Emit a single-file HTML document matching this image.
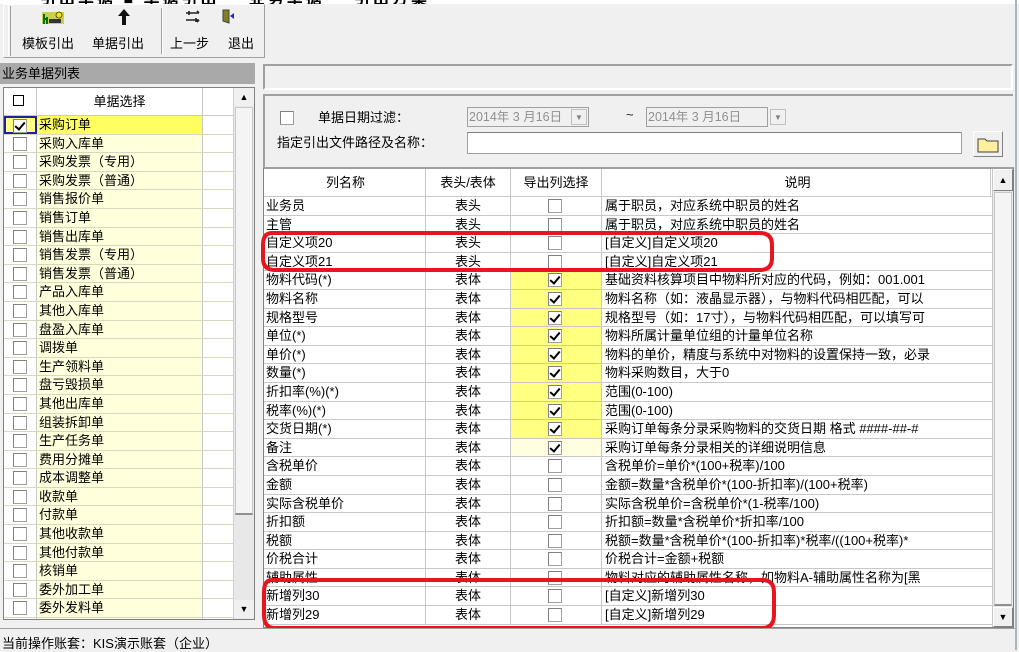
<!DOCTYPE html>
<html><head><meta charset="utf-8"><style>
*{box-sizing:border-box;margin:0;padding:0}
body{width:1019px;height:650px;overflow:hidden;background:#f0f0f0;font-family:"Liberation Sans","Noto Sans CJK SC","WenQuanYi Zen Hei",sans-serif;font-size:13px;color:#000;position:relative}
.abs{position:absolute}
.tb{font-size:13px;text-align:center}
.row{display:flex;height:18.6px;line-height:18px;border-bottom:1px solid #c8c8c8;background:#fff}
.row>div{border-right:1px solid #c8c8c8;overflow:hidden;white-space:nowrap;position:relative}
.c1{width:162px;padding-left:2px}.c2{width:85px;text-align:center}.c3{width:91px}.c4{width:389px;padding-left:3px;border-right:none!important}
.cb{position:absolute;left:37px;top:2px;width:14px;height:14px;border:1px solid #a0a0a0;border-top-color:#808080;border-left-color:#808080;background:#fff}
.ck::after{content:"";position:absolute;left:3px;top:0px;width:4px;height:8px;border:solid #000;border-width:0 2px 2px 0;transform:rotate(40deg)}
.y{background:#ffff80}.ly{background:#ffffe0}
.lrow{display:flex;height:18.6px;line-height:18px;border-bottom:1px solid #d8d8c0}
.lrow .a{width:33px;border-right:1px solid #c8c8c8;background:#fff;position:relative}
.lrow .b{width:166px;background:#ffffdc;padding-left:2px;border-right:1px solid #c8c8c8}
.lrow .cb{left:9px}
</style></head><body>
<div class="abs" style="left:0;top:0;width:1019px;height:4px;background:#fff;overflow:hidden"><div style="position:absolute;left:40px;top:-15px;font-size:16px;font-weight:bold;letter-spacing:3px;white-space:nowrap">引出单据 ■ 单据引出 ─ 业务单据 ─ 引出方案</div></div>
<div class="abs" style="left:1015px;top:0;width:2px;height:650px;background:#a8b4c4"></div>
<div class="abs" style="left:3px;top:4px;width:262px;height:54px;border:1px solid #fff;border-right-color:#a0a0a0;border-bottom-color:#a0a0a0"></div>
<div class="abs" style="left:8px;top:6px;width:3px;height:50px;border-left:1px solid #fff;border-right:1px solid #a0a0a0"></div>
<div class="abs" style="left:161px;top:8px;width:2px;height:46px;border-left:1px solid #a0a0a0;border-right:1px solid #fff"></div>
<svg class="abs" style="left:40px;top:10px" width="26" height="16"><rect x="2" y="2" width="22" height="12" fill="#c8d050"/><circle cx="19" cy="5" r="3" fill="#ffe000" stroke="#333" stroke-width=".8"/><path d="M4 14V4M7 14V7M4 9h3" stroke="#007000" stroke-width="2"/><rect x="9" y="9" width="12" height="4" fill="#333"/></svg>
<svg class="abs" style="left:116px;top:8px" width="16" height="18"><path d="M8 1L2 8h4v9h4V8h4z" fill="#111"/></svg>
<svg class="abs" style="left:185px;top:10px" width="16" height="14"><path d="M1 3h13M1 10h13M4 1v4M11 8v4M14 3l-2-2M14 10l-2 2" stroke="#222" stroke-width="1.6" fill="none"/></svg>
<svg class="abs" style="left:221px;top:8px" width="16" height="16"><path d="M2 2h6v13l-6-2z" fill="#808020" stroke="#444"/><path d="M9 8l4-3v6z" fill="#1030d0"/></svg>
<div class="abs tb" style="left:22px;top:33px">模板引出</div>
<div class="abs tb" style="left:92px;top:33px">单据引出</div>
<div class="abs tb" style="left:170px;top:33px">上一步</div>
<div class="abs tb" style="left:228px;top:33px">退出</div>
<div class="abs" style="left:0;top:63px;width:255px;height:21px;background:#a9a9a9;line-height:21px;padding-left:2px">业务单据列表</div>
<div class="abs" style="left:3px;top:87px;width:252px;height:533px;border:1px solid #808080;background:#fff;overflow:hidden">
 <div style="display:flex;height:28px;line-height:28px;border-bottom:1px solid #c8c8c8">
  <div style="width:33px;border-right:1px solid #c8c8c8;position:relative"><div class="cb" style="left:9px;top:7px;width:11px;height:11px;border:1.5px solid #000"></div></div>
  <div style="width:166px;text-align:center;border-right:1px solid #c8c8c8">单据选择</div>
 </div>
 <div class="lrow"><div class="a" style="background:#ffff80;border:2px solid #2020a0"><div class="cb ck" style="left:7px;top:1px"></div></div><div class="b" style="background:#ffff60">采购订单</div></div>
 <div class="lrow"><div class="a"><div class="cb"></div></div><div class="b">采购入库单</div></div>
 <div class="lrow"><div class="a"><div class="cb"></div></div><div class="b">采购发票（专用）</div></div>
 <div class="lrow"><div class="a"><div class="cb"></div></div><div class="b">采购发票（普通）</div></div>
 <div class="lrow"><div class="a"><div class="cb"></div></div><div class="b">销售报价单</div></div>
 <div class="lrow"><div class="a"><div class="cb"></div></div><div class="b">销售订单</div></div>
 <div class="lrow"><div class="a"><div class="cb"></div></div><div class="b">销售出库单</div></div>
 <div class="lrow"><div class="a"><div class="cb"></div></div><div class="b">销售发票（专用）</div></div>
 <div class="lrow"><div class="a"><div class="cb"></div></div><div class="b">销售发票（普通）</div></div>
 <div class="lrow"><div class="a"><div class="cb"></div></div><div class="b">产品入库单</div></div>
 <div class="lrow"><div class="a"><div class="cb"></div></div><div class="b">其他入库单</div></div>
 <div class="lrow"><div class="a"><div class="cb"></div></div><div class="b">盘盈入库单</div></div>
 <div class="lrow"><div class="a"><div class="cb"></div></div><div class="b">调拨单</div></div>
 <div class="lrow"><div class="a"><div class="cb"></div></div><div class="b">生产领料单</div></div>
 <div class="lrow"><div class="a"><div class="cb"></div></div><div class="b">盘亏毁损单</div></div>
 <div class="lrow"><div class="a"><div class="cb"></div></div><div class="b">其他出库单</div></div>
 <div class="lrow"><div class="a"><div class="cb"></div></div><div class="b">组装拆卸单</div></div>
 <div class="lrow"><div class="a"><div class="cb"></div></div><div class="b">生产任务单</div></div>
 <div class="lrow"><div class="a"><div class="cb"></div></div><div class="b">费用分摊单</div></div>
 <div class="lrow"><div class="a"><div class="cb"></div></div><div class="b">成本调整单</div></div>
 <div class="lrow"><div class="a"><div class="cb"></div></div><div class="b">收款单</div></div>
 <div class="lrow"><div class="a"><div class="cb"></div></div><div class="b">付款单</div></div>
 <div class="lrow"><div class="a"><div class="cb"></div></div><div class="b">其他收款单</div></div>
 <div class="lrow"><div class="a"><div class="cb"></div></div><div class="b">其他付款单</div></div>
 <div class="lrow"><div class="a"><div class="cb"></div></div><div class="b">核销单</div></div>
 <div class="lrow"><div class="a"><div class="cb"></div></div><div class="b">委外加工单</div></div>
 <div class="lrow"><div class="a"><div class="cb"></div></div><div class="b">委外发料单</div></div>
 <div class="lrow"><div class="a"><div class="cb"></div></div><div class="b">委外产品入库单</div></div>
</div>
<div class="abs" style="left:233px;top:88px;width:21px;height:531px;background:#e8e8e8;border-left:1px solid #d0d0d0"></div>
<div class="abs" style="left:234px;top:88px;width:20px;height:18px;background:#f0f0f0;text-align:center;font-size:9px;line-height:18px">▲</div>
<div class="abs" style="left:234px;top:600px;width:20px;height:18px;background:#f0f0f0;text-align:center;font-size:9px;line-height:18px">▼</div>
<div class="abs" style="left:235px;top:107px;width:18px;height:408px;background:#f4f4f4;border:1px solid #c8c8c8;border-bottom:2px solid #909090"></div>
<div class="abs" style="left:263px;top:64px;width:750px;height:26px;border:2px solid #a0a0a0;border-right-color:#fff;border-bottom-color:#fff;border-top-width:2px"></div>
<div class="abs" style="left:263px;top:94px;width:750px;height:74px;border-top:2px solid #a0a0a0;border-left:2px solid #a0a0a0"></div>
<div class="abs cb" style="left:280px;top:111px;width:14px;height:14px"></div>
<div class="abs" style="left:318px;top:107px">单据日期过滤：</div>
<div class="abs" style="left:467px;top:107px;width:122px;height:20px;border:1px solid #a0a0a0;color:#909090;line-height:18px;padding-left:1px;font-size:12.5px">2014年 3 月16日</div>
<div class="abs" style="left:571px;top:109px;width:16px;height:16px;border:1px solid #c0c0c0;background:#f0f0f0;font-size:8px;color:#808080;text-align:center;line-height:15px">▼</div>
<div class="abs" style="left:626px;top:107px;color:#222">~</div>
<div class="abs" style="left:646px;top:107px;width:122px;height:20px;border:1px solid #a0a0a0;color:#909090;line-height:18px;padding-left:1px;font-size:12.5px">2014年 3 月16日</div>
<div class="abs" style="left:770px;top:109px;width:16px;height:16px;border:1px solid #c0c0c0;background:#f0f0f0;font-size:8px;color:#808080;text-align:center;line-height:15px">▼</div>
<div class="abs" style="left:277px;top:132px">指定引出文件路径及名称：</div>
<div class="abs" style="left:467px;top:132px;width:495px;height:22px;border:1px solid #a0a0a0;border-top-color:#808080;background:#fff"></div>
<div class="abs" style="left:973px;top:131px;width:30px;height:26px;border:1px solid #fff;border-right-color:#808080;border-bottom-color:#808080"></div>
<svg class="abs" style="left:976px;top:135px" width="24" height="18"><path d="M2 4h7l2 2h11v11H2z" fill="#fff0a0" stroke="#404040"/></svg>
<div class="abs" style="left:263px;top:167px;width:751px;height:461px;border:1px solid #808080;border-top:2px solid #a0a0a0;background:#fff;overflow:hidden">
 <div class="row" style="height:28px;line-height:27px;background:#fff">
  <div class="c1" style="text-align:center">列名称</div><div class="c2">表头/表体</div><div class="c3" style="text-align:center">导出列选择</div><div class="c4" style="text-align:center;border-right:1px solid #c8c8c8!important">说明</div>
 </div>
 <div class="row"><div class="c1">业务员</div><div class="c2">表头</div><div class="c3"><i class="cb"></i></div><div class="c4">属于职员，对应系统中职员的姓名</div></div>
 <div class="row"><div class="c1">主管</div><div class="c2">表头</div><div class="c3"><i class="cb"></i></div><div class="c4">属于职员，对应系统中职员的姓名</div></div>
 <div class="row"><div class="c1">自定义项20</div><div class="c2">表头</div><div class="c3"><i class="cb"></i></div><div class="c4">[自定义]自定义项20</div></div>
 <div class="row"><div class="c1">自定义项21</div><div class="c2">表头</div><div class="c3"><i class="cb"></i></div><div class="c4">[自定义]自定义项21</div></div>
 <div class="row"><div class="c1">物料代码(*)</div><div class="c2">表体</div><div class="c3 y"><i class="cb ck"></i></div><div class="c4">基础资料核算项目中物料所对应的代码，例如：001.001</div></div>
 <div class="row"><div class="c1">物料名称</div><div class="c2">表体</div><div class="c3 y"><i class="cb ck"></i></div><div class="c4">物料名称（如：液晶显示器），与物料代码相匹配，可以</div></div>
 <div class="row"><div class="c1">规格型号</div><div class="c2">表体</div><div class="c3 y"><i class="cb ck"></i></div><div class="c4">规格型号（如：17寸），与物料代码相匹配，可以填写可</div></div>
 <div class="row"><div class="c1">单位(*)</div><div class="c2">表体</div><div class="c3 y"><i class="cb ck"></i></div><div class="c4">物料所属计量单位组的计量单位名称</div></div>
 <div class="row"><div class="c1">单价(*)</div><div class="c2">表体</div><div class="c3 y"><i class="cb ck"></i></div><div class="c4">物料的单价，精度与系统中对物料的设置保持一致，必录</div></div>
 <div class="row"><div class="c1">数量(*)</div><div class="c2">表体</div><div class="c3 y"><i class="cb ck"></i></div><div class="c4">物料采购数目，大于0</div></div>
 <div class="row"><div class="c1">折扣率(%)(*)</div><div class="c2">表体</div><div class="c3 y"><i class="cb ck"></i></div><div class="c4">范围(0-100)</div></div>
 <div class="row"><div class="c1">税率(%)(*)</div><div class="c2">表体</div><div class="c3 y"><i class="cb ck"></i></div><div class="c4">范围(0-100)</div></div>
 <div class="row"><div class="c1">交货日期(*)</div><div class="c2">表体</div><div class="c3 y"><i class="cb ck"></i></div><div class="c4">采购订单每条分录采购物料的交货日期 格式 ####-##-#</div></div>
 <div class="row"><div class="c1">备注</div><div class="c2">表体</div><div class="c3 ly"><i class="cb ck"></i></div><div class="c4">采购订单每条分录相关的详细说明信息</div></div>
 <div class="row"><div class="c1">含税单价</div><div class="c2">表体</div><div class="c3"><i class="cb"></i></div><div class="c4">含税单价=单价*(100+税率)/100</div></div>
 <div class="row"><div class="c1">金额</div><div class="c2">表体</div><div class="c3"><i class="cb"></i></div><div class="c4">金额=数量*含税单价*(100-折扣率)/(100+税率)</div></div>
 <div class="row"><div class="c1">实际含税单价</div><div class="c2">表体</div><div class="c3"><i class="cb"></i></div><div class="c4">实际含税单价=含税单价*(1-税率/100)</div></div>
 <div class="row"><div class="c1">折扣额</div><div class="c2">表体</div><div class="c3"><i class="cb"></i></div><div class="c4">折扣额=数量*含税单价*折扣率/100</div></div>
 <div class="row"><div class="c1">税额</div><div class="c2">表体</div><div class="c3"><i class="cb"></i></div><div class="c4">税额=数量*含税单价*(100-折扣率)*税率/((100+税率)*</div></div>
 <div class="row"><div class="c1">价税合计</div><div class="c2">表体</div><div class="c3"><i class="cb"></i></div><div class="c4">价税合计=金额+税额</div></div>
 <div class="row"><div class="c1">辅助属性</div><div class="c2">表体</div><div class="c3"><i class="cb"></i></div><div class="c4">物料对应的辅助属性名称，如物料A-辅助属性名称为[黑</div></div>
 <div class="row"><div class="c1">新增列30</div><div class="c2">表体</div><div class="c3"><i class="cb"></i></div><div class="c4">[自定义]新增列30</div></div>
 <div class="row"><div class="c1">新增列29</div><div class="c2">表体</div><div class="c3"><i class="cb"></i></div><div class="c4">[自定义]新增列29</div></div>
</div>
<div class="abs" style="left:992px;top:169px;width:21px;height:458px;background:#e8e8e8;border-left:1px solid #c8c8c8"></div>
<div class="abs" style="left:993px;top:169px;width:20px;height:22px;background:#f0f0f0;border:1px solid #fff;border-right-color:#808080;border-bottom-color:#808080;text-align:center;font-size:9px;line-height:20px">▲</div>
<div class="abs" style="left:994px;top:192px;width:18px;height:414px;background:#f4f4f4;border:1px solid #c8c8c8;border-bottom:2px solid #909090"></div>
<div class="abs" style="left:993px;top:607px;width:20px;height:20px;background:#f0f0f0;border:1px solid #fff;border-right-color:#808080;border-bottom-color:#808080;text-align:center;font-size:9px;line-height:18px">▼</div>
<svg class="abs" style="left:0;top:0" width="1019" height="650">
 <path d="M272 233 H760 Q772 233 772 245 V258 Q772 270 760 270 H275 Q263 270 263 258 V245 Q263 233 272 233Z" fill="none" stroke="#e8141e" stroke-width="4"/>
 <path d="M272 580 H762 Q774 580 774 592 V615 Q774 628 762 628 H275 Q264 628 264 615 V592 Q264 580 272 580Z" fill="none" stroke="#e8141e" stroke-width="4"/>
</svg>
<div class="abs" style="left:0;top:628px;width:1015px;height:22px;border-top:1px solid #a0a0a0;background:#f0f0f0"></div>
<div class="abs" style="left:2px;top:633px">当前操作账套：KIS演示账套（企业）</div>
</body></html>
